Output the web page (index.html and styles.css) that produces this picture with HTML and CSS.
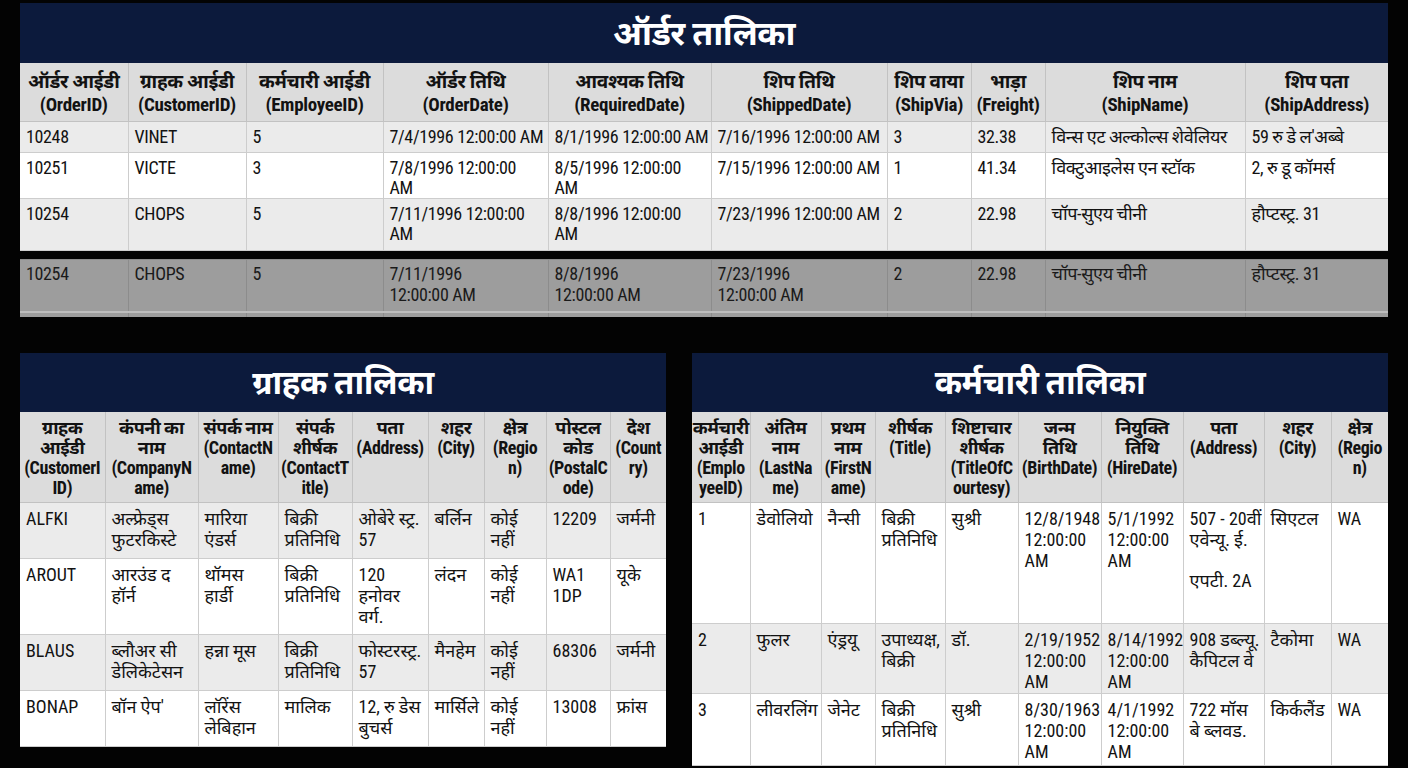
FILE: index.html
```html
<!DOCTYPE html>
<html lang="hi">
<head>
<meta charset="utf-8">
<title>तालिकाएँ</title>
<link rel="stylesheet" href="styles.css">
</head>
<body>
<div class="page">
  <section class="panel panel-orders">
    <h1 class="panel-title">ऑर्डर तालिका</h1>
    <table class="grid orders">
      <colgroup>
        <col style="width:108px"><col style="width:118px"><col style="width:137px"><col style="width:165px"><col style="width:163px"><col style="width:176px"><col style="width:84px"><col style="width:74px"><col style="width:200px"><col style="width:143px">
      </colgroup>
      <thead>
        <tr>
          <th>ऑर्डर आईडी<br>(OrderID)</th>
          <th>ग्राहक आईडी<br>(CustomerID)</th>
          <th>कर्मचारी आईडी<br>(EmployeeID)</th>
          <th>ऑर्डर तिथि<br>(OrderDate)</th>
          <th>आवश्यक तिथि<br>(RequiredDate)</th>
          <th>शिप तिथि<br>(ShippedDate)</th>
          <th>शिप वाया<br>(ShipVia)</th>
          <th>भाड़ा<br>(Freight)</th>
          <th>शिप नाम<br>(ShipName)</th>
          <th>शिप पता<br>(ShipAddress)</th>
        </tr>
      </thead>
      <tbody>
        <tr class="alt r1">
          <td>10248</td><td>VINET</td><td>5</td><td>7/4/1996 12:00:00 AM</td><td>8/1/1996 12:00:00 AM</td><td>7/16/1996 12:00:00 AM</td><td>3</td><td>32.38</td><td>विन्स एट अल्कोल्स शेवेलियर</td><td>59 रु डे ल'अब्बे</td>
        </tr>
        <tr class="r2">
          <td>10251</td><td>VICTE</td><td>3</td><td>7/8/1996 12:00:00<br>AM</td><td>8/5/1996 12:00:00<br>AM</td><td>7/15/1996 12:00:00 AM</td><td>1</td><td>41.34</td><td>विक्टुआइलेस एन स्टॉक</td><td>2, रु डू कॉमर्स</td>
        </tr>
        <tr class="alt r3">
          <td>10254</td><td>CHOPS</td><td>5</td><td>7/11/1996 12:00:00<br>AM</td><td>8/8/1996 12:00:00<br>AM</td><td>7/23/1996 12:00:00 AM</td><td>2</td><td>22.98</td><td>चॉप-सुएय चीनी</td><td>हौप्टस्ट्र. 31</td>
        </tr>
      </tbody>
    </table>
  </section>

  <div class="ghost">
    <table class="grid orders ghost-table">
      <colgroup>
        <col style="width:108px"><col style="width:118px"><col style="width:137px"><col style="width:165px"><col style="width:163px"><col style="width:176px"><col style="width:84px"><col style="width:74px"><col style="width:200px"><col style="width:143px">
      </colgroup>
      <tbody>
        <tr class="g1">
          <td>10254</td><td>CHOPS</td><td>5</td><td>7/11/1996<br>12:00:00 AM</td><td>8/8/1996<br>12:00:00 AM</td><td>7/23/1996<br>12:00:00 AM</td><td>2</td><td>22.98</td><td>चॉप-सुएय चीनी</td><td>हौप्टस्ट्र. 31</td>
        </tr>
        <tr class="g2">
          <td></td><td></td><td></td><td></td><td></td><td></td><td></td><td></td><td></td><td></td>
        </tr>
      </tbody>
    </table>
  </div>

  <div class="bottom">
    <section class="panel panel-customers">
      <h2 class="panel-title">ग्राहक तालिका</h2>
      <table class="grid customers">
        <colgroup>
          <col style="width:85px"><col style="width:93px"><col style="width:80px"><col style="width:74px"><col style="width:76px"><col style="width:56px"><col style="width:62px"><col style="width:64px"><col style="width:56px">
        </colgroup>
        <thead>
          <tr>
            <th>ग्राहक<br>आईडी<br>(CustomerI<br>ID)</th>
            <th>कंपनी का<br>नाम<br>(CompanyN<br>ame)</th>
            <th>संपर्क नाम<br>(ContactN<br>ame)</th>
            <th>संपर्क<br>शीर्षक<br>(ContactT<br>itle)</th>
            <th>पता<br>(Address)</th>
            <th>शहर<br>(City)</th>
            <th>क्षेत्र<br>(Regio<br>n)</th>
            <th>पोस्टल<br>कोड<br>(PostalC<br>ode)</th>
            <th>देश<br>(Count<br>ry)</th>
          </tr>
        </thead>
        <tbody>
          <tr class="alt c1">
            <td>ALFKI</td><td>अल्फ्रेड्स<br>फुटरकिस्टे</td><td>मारिया<br>एंडर्स</td><td>बिक्री<br>प्रतिनिधि</td><td>ओबेरे स्ट्र.<br>57</td><td>बर्लिन</td><td>कोई<br>नहीं</td><td>12209</td><td>जर्मनी</td>
          </tr>
          <tr class="c2">
            <td>AROUT</td><td>आरउंड द<br>हॉर्न</td><td>थॉमस<br>हार्डी</td><td>बिक्री<br>प्रतिनिधि</td><td>120<br>हनोवर<br>वर्ग.</td><td>लंदन</td><td>कोई<br>नहीं</td><td>WA1<br>1DP</td><td>यूके</td>
          </tr>
          <tr class="alt c3">
            <td>BLAUS</td><td>ब्लौअर सी<br>डेलिकेटेसन</td><td>हन्ना मूस</td><td>बिक्री<br>प्रतिनिधि</td><td>फोस्टरस्ट्र.<br>57</td><td>मैनहेम</td><td>कोई<br>नहीं</td><td>68306</td><td>जर्मनी</td>
          </tr>
          <tr class="c4">
            <td>BONAP</td><td>बॉन ऐप'</td><td>लॉरेंस<br>लेबिहान</td><td>मालिक</td><td>12, रु डेस<br>बुचर्स</td><td>मार्सिले</td><td>कोई<br>नहीं</td><td>13008</td><td>फ्रांस</td>
          </tr>
        </tbody>
      </table>
    </section>

    <section class="panel panel-employees">
      <h2 class="panel-title">कर्मचारी तालिका</h2>
      <table class="grid employees">
        <colgroup>
          <col style="width:58px"><col style="width:71px"><col style="width:54px"><col style="width:70px"><col style="width:73px"><col style="width:83px"><col style="width:82px"><col style="width:81px"><col style="width:67px"><col style="width:57px">
        </colgroup>
        <thead>
          <tr>
            <th>कर्मचारी<br>आईडी<br>(Emplo<br>yeeID)</th>
            <th>अंतिम<br>नाम<br>(LastNa<br>me)</th>
            <th>प्रथम<br>नाम<br>(FirstN<br>ame)</th>
            <th>शीर्षक<br>(Title)</th>
            <th>शिष्टाचार<br>शीर्षक<br>(TitleOfC<br>ourtesy)</th>
            <th>जन्म<br>तिथि<br>(BirthDate)</th>
            <th>नियुक्ति<br>तिथि<br>(HireDate)</th>
            <th>पता<br>(Address)</th>
            <th>शहर<br>(City)</th>
            <th>क्षेत्र<br>(Regio<br>n)</th>
          </tr>
        </thead>
        <tbody>
          <tr class="e1">
            <td>1</td><td>डेवोलियो</td><td>नैन्सी</td><td>बिक्री<br>प्रतिनिधि</td><td>सुश्री</td><td>12/8/1948<br>12:00:00<br>AM</td><td>5/1/1992<br>12:00:00<br>AM</td><td>507 - 20वीं<br>एवेन्यू. ई.<br><span class="gap"></span>एपटी. 2A</td><td>सिएटल</td><td>WA</td>
          </tr>
          <tr class="alt e2">
            <td>2</td><td>फुलर</td><td>एंड्रयू</td><td>उपाध्यक्ष,<br>बिक्री</td><td>डॉ.</td><td>2/19/1952<br>12:00:00<br>AM</td><td>8/14/1992<br>12:00:00<br>AM</td><td>908 डब्ल्यू.<br>कैपिटल वे</td><td>टैकोमा</td><td>WA</td>
          </tr>
          <tr class="e3">
            <td>3</td><td>लीवरलिंग</td><td>जेनेट</td><td>बिक्री<br>प्रतिनिधि</td><td>सुश्री</td><td>8/30/1963<br>12:00:00<br>AM</td><td>4/1/1992<br>12:00:00<br>AM</td><td>722 मॉस<br>बे ब्लवड.</td><td>किर्कलैंड</td><td>WA</td>
          </tr>
        </tbody>
      </table>
    </section>
  </div>
</div>
</body>
</html>
```

FILE: styles.css
```css
* { box-sizing: border-box; }
html, body {
  margin: 0;
  padding: 0;
  background: #030303;
}
body {
  width: 1408px;
  height: 768px;
  overflow: hidden;
  font-family: "Liberation Sans Narrow", "Roboto Condensed", "Liberation Sans", "Noto Sans", sans-serif;
  color: #121212;
}
.page {
  padding: 3px 20px 0 20px;
}
.panel {
  background: #f1f1f1;
}
.panel-title {
  margin: 0;
  background: #0c1a3c;
  color: #ffffff;
  font-weight: 700;
  text-align: center;
  font-size: 34px;
  line-height: 60px;
  height: 60px;
  letter-spacing: -0.5px;
}
.grid {
  border-collapse: collapse;
  table-layout: fixed;
  width: 100%;
  font-size: 18px;
  line-height: 20px;
}
.grid th {
  background: #dcdcdc;
  font-weight: 700;
  text-align: center;
  vertical-align: top;
  border: 1px solid #c2c2c2;
  border-top: 0;
  padding: 7px 1px 3px 1px;
  line-height: 23px;
  font-size: 19px;
  letter-spacing: -0.3px;
  overflow: hidden;
  white-space: nowrap;
}
.grid td {
  vertical-align: top;
  text-align: left;
  border: 1px solid #cdcdcd;
  padding: 5px 1px 0 6px;
  overflow: hidden;
  white-space: nowrap;
}
.grid tr { background: #ffffff; }
.grid tr.alt { background: #ebebeb; }
.grid tr > :first-child { border-left: 0; }
.grid tr > :last-child { border-right: 0; }

.orders td { letter-spacing: -0.35px; }
.orders th { height: 58px; }
.orders tbody tr.r1 { height: 31px; }
.orders tbody tr.r2 { height: 45px; }
.orders tbody tr.r3 { height: 52px; }
.orders tbody tr.r1 td { padding-top: 5px; }

.ghost {
  margin-top: 8px;
  height: 58px;
  overflow: hidden;
  background: #9c9c9c;
}
.ghost-table tr.g1, .ghost-table tr.g2 { background: #9d9d9d; }
.ghost-table td { border-color: #8c8c8c; color: #1a1a1a; padding-top: 3px; line-height: 21px; }
.ghost-table tr.g1 { height: 53px; }
.ghost-table tr.g2 { height: 20px; }
.ghost-table tr.g2 td { border-top: 2px solid #bdbdbd; }

.bottom {
  display: flex;
  gap: 26px;
  margin-top: 36px;
  align-items: flex-start;
}
.panel-customers { width: 646px; }
.panel-employees { width: 696px; }
.bottom .panel-title { height: 59px; line-height: 59px; font-size: 33px; }
.bottom .grid th { height: 91px; line-height: 20px; padding-top: 6px; font-size: 18px; letter-spacing: -0.4px; }
.bottom .grid td { line-height: 21px; padding-top: 5px; }

.customers tr.c1 { height: 56px; }
.customers tr.c2 { height: 76px; }
.customers tr.c3 { height: 56px; }
.customers tr.c4 { height: 56px; }

.employees tr.e1 { height: 121px; }
.employees tr.e2 { height: 70px; }
.employees tr.e3 { height: 72px; }
.employees th:first-child { padding-left: 0; padding-right: 0; }
.gap { display: block; height: 20px; }
```
